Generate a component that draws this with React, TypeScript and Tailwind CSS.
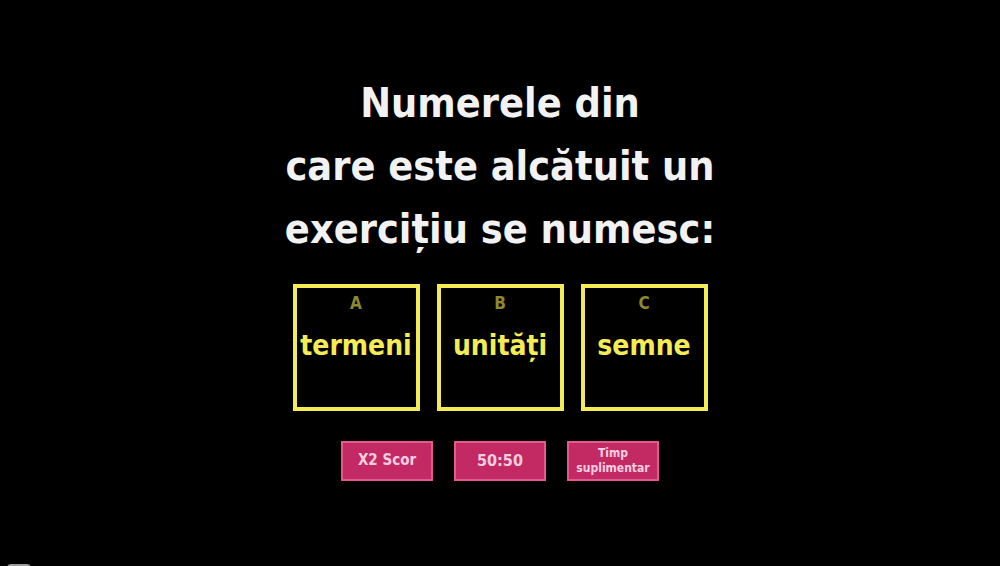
export default function App() {
  const answers = [
    { letter: "A", text: "termeni" },
    { letter: "B", text: "unități" },
    { letter: "C", text: "semne" },
  ];

  return (
    <div
      className="relative flex h-[566px] w-[1000px] flex-col items-center justify-center bg-black pb-[14px] font-stretch-condensed"
      style={{ fontFamily: '"DejaVu Sans", "Liberation Sans", sans-serif' }}
    >
      <h1 className="text-center text-[41px] font-bold leading-[63px] text-[#f2f2f2]">
        Numerele din
        <br />
        care este alcătuit un
        <br />
        exercițiu se numesc:
      </h1>

      <div className="mt-[23px] flex gap-[17px]">
        {answers.map((a) => (
          <div
            key={a.letter}
            className="flex h-[127px] w-[127px] flex-col items-center border-4 border-[#f5ec55] pt-[4px]"
          >
            <span className="text-[17px] font-bold leading-[22px] text-[#8c8a2c]">{a.letter}</span>
            <span className="mt-[15px] text-[28px] font-bold leading-[34px] text-[#f5ec55]">{a.text}</span>
          </div>
        ))}
      </div>

      <div className="mt-[30px] flex gap-[21px]">
        <button
          type="button"
          className="flex h-[40px] w-[92px] items-center justify-center border-2 border-[#e45a90] bg-[#c32962] text-[15px] font-bold text-[#f9cfe0]"
        >
          X2 Scor
        </button>
        <button
          type="button"
          className="flex h-[40px] w-[92px] items-center justify-center border-2 border-[#e45a90] bg-[#c32962] text-[16px] font-bold text-[#f9cfe0]"
        >
          50:50
        </button>
        <button
          type="button"
          className="flex h-[40px] w-[92px] items-center justify-center border-2 border-[#e45a90] bg-[#c32962] text-center text-[12px] font-bold leading-[15px] text-[#f9cfe0]"
        >
          Timp
          <br />
          suplimentar
        </button>
      </div>

      <div className="absolute bottom-[-4px] left-[7px] h-[6px] w-[24px] rounded-t bg-[#9a9a9a]" />
    </div>
  );
}
